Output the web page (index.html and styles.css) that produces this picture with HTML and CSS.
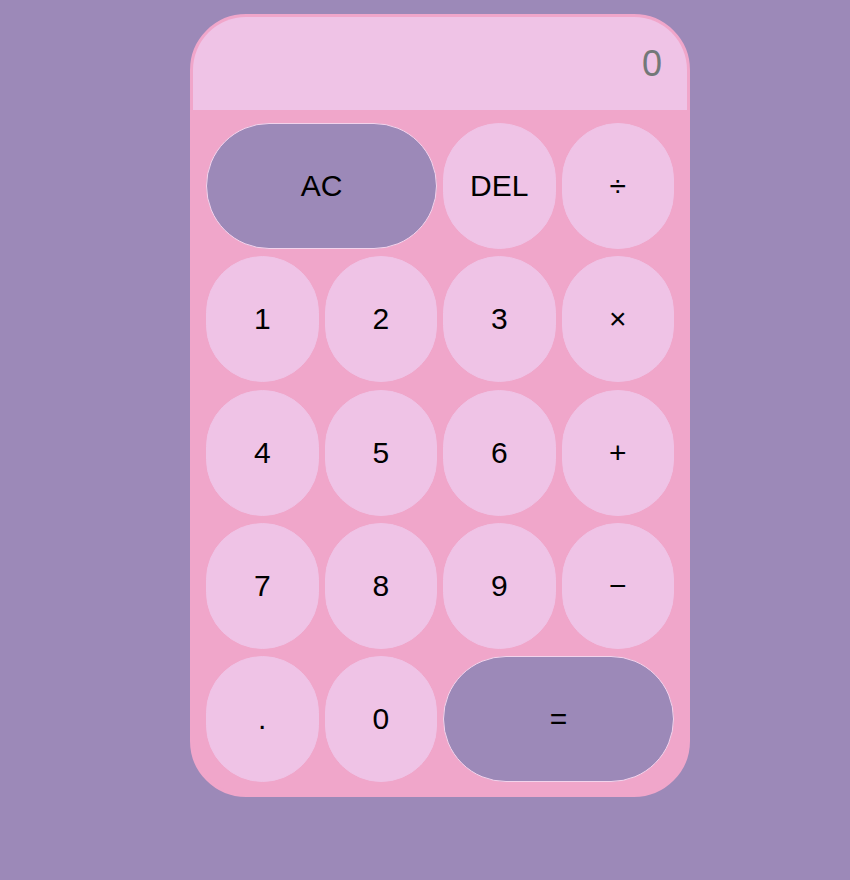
FILE: index.html
```html
<!DOCTYPE html>
<html lang="en">
<head>
<meta charset="utf-8">
<title>Calculator</title>
<link rel="stylesheet" href="styles.css">
</head>
<body>
<div class="calculator">
  <div class="display">0</div>
  <div class="keys">
    <button class="key key-wide key-dark">AC</button>
    <button class="key">DEL</button>
    <button class="key">÷</button>
    <button class="key">1</button>
    <button class="key">2</button>
    <button class="key">3</button>
    <button class="key">×</button>
    <button class="key">4</button>
    <button class="key">5</button>
    <button class="key">6</button>
    <button class="key">+</button>
    <button class="key">7</button>
    <button class="key">8</button>
    <button class="key">9</button>
    <button class="key">−</button>
    <button class="key">.</button>
    <button class="key">0</button>
    <button class="key key-wide key-dark">=</button>
  </div>
</div>
</body>
</html>
```
FILE: styles.css
```css
html, body {
  margin: 0;
  padding: 0;
}
body {
  background: #9c89b8;
  font-family: "Liberation Sans", Arial, sans-serif;
  padding-top: 14px;
  min-height: 880px;
  box-sizing: border-box;
}
.calculator {
  width: 500px;
  height: 783px;
  box-sizing: border-box;
  margin-left: 190px;
  border: 3px solid #f0a6ca;
  border-radius: 56px;
  background: #f0a6ca;
  overflow: hidden;
  display: flex;
  flex-direction: column;
}
.display {
  height: 93px;
  background: #efc3e6;
  color: #737878;
  font-size: 36px;
  display: flex;
  align-items: center;
  justify-content: flex-end;
  padding-right: 25px;
  flex-shrink: 0;
}
.keys {
  display: grid;
  grid-template-columns: repeat(4, 1fr);
  grid-auto-rows: 126px;
  column-gap: 6px;
  row-gap: 7.25px;
  padding: 13px 13px 0 13px;
}
.key {
  font-family: "Liberation Sans", Arial, sans-serif;
  font-size: 30px;
  color: #000;
  background: #efc3e6;
  border: 1px solid #efc3e6;
  border-radius: 100px;
  padding: 0;
  margin: 0;
}
.key-wide {
  grid-column: span 2;
}
.key-dark {
  background: #9c89b8;
  border-color: #f3d3ec;
}
```
